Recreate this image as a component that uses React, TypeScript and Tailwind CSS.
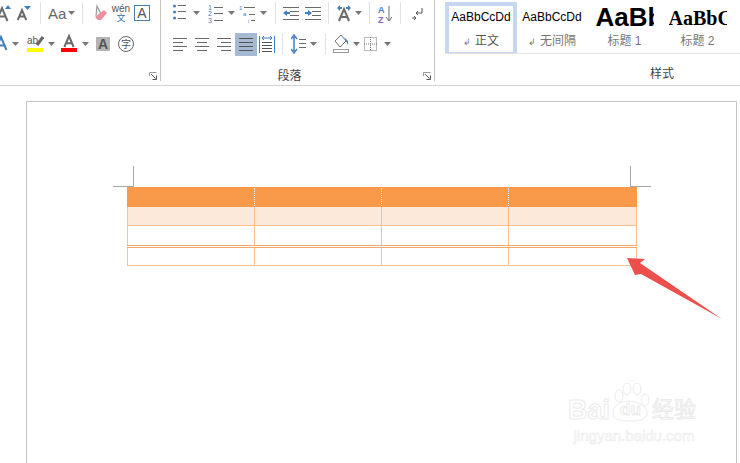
import React from "react";

const GRAY = "#6a6a6a";
const BLUE = "#3f7fbf";

// small ribbon drop-down arrow
function Caret({ ml }: { ml: string }) {
  return (
    <svg width="7" height="4" viewBox="0 0 7 4" className={`shrink-0 ${ml}`}>
      <path d="M0 0H7L3.5 4Z" fill="#777" />
    </svg>
  );
}

function Sep({ ml }: { ml: string }) {
  return <div className={`w-px h-[22px] shrink-0 bg-[#e1e1e1] ${ml}`} />;
}

function Ico({ w, ml, children, h = 22 }: { w: number; ml: string; h?: number; children: React.ReactNode }) {
  return (
    <svg width={w} height={h} viewBox={`0 0 ${w} ${h}`} className={`shrink-0 ${ml}`} fill="none">
      {children}
    </svg>
  );
}

function Lines({ x, w, ys, c = GRAY }: { x: number | number[]; w: number | number[]; ys: number[]; c?: string }) {
  return (
    <>
      {ys.map((y, i) => (
        <rect
          key={y}
          x={Array.isArray(x) ? x[i] : x}
          y={y}
          width={Array.isArray(w) ? w[i] : w}
          height="1"
          fill={c}
        />
      ))}
    </>
  );
}

function LetterA({ x, y, h, c = GRAY, w = 2 }: { x: number; y: number; h: number; c?: string; w?: number }) {
  const half = h * 0.42;
  return (
    <path
      d={`M${x - half} ${y + h}L${x} ${y}L${x + half} ${y + h}M${x - half * 0.6} ${y + h * 0.66}H${x + half * 0.6}`}
      stroke={c}
      strokeWidth={w}
    />
  );
}

function Launcher() {
  return (
    <svg width="8" height="8" viewBox="0 0 8 8" fill="none">
      <path d="M.5 4V.5H7.5" stroke="#999" />
      <path d="M2 2L6.5 6.5M7.5 3.5V7.5H3.5" stroke="#555" />
    </svg>
  );
}

function Group1() {
  return (
    <div className="w-[160px] shrink-0 flex flex-col">
      <div className="h-[22px] mt-[2px] flex items-center">
        <Ico w={16} ml="ml-[-4px]">
          <LetterA x={6} y={6} h={13} />
          <path d="M9 7L12 3L15 7Z" fill={BLUE} />
        </Ico>
        <Ico w={16} ml="ml-[5px]">
          <LetterA x={5} y={8} h={10} />
          <path d="M7 4H14L10.5 8Z" fill={BLUE} />
        </Ico>
        <Sep ml="ml-[7px]" />
        <div className="ml-[7px] w-[17px] shrink-0 text-[15px] leading-none text-[#666] font-['Liberation_Sans',sans-serif]">Aa</div>
        <Caret ml="ml-[3px]" />
        <Sep ml="ml-[7px]" />
        <Ico w={16} ml="ml-[9px]">
          <path d="M4 14L5 4L9 12" stroke="#999" strokeWidth="1.2" />
          <path d="M3 15L12 8L15 11L9 18H6Z" fill="#ee8f9f" />
        </Ico>
        <div className="ml-[4px] w-[18px] shrink-0 flex flex-col items-center font-['Liberation_Sans','Noto_Sans_CJK_SC',sans-serif]">
          <span className="text-[10px] leading-[10px] text-[#555]">wén</span>
          <span className="text-[9px] leading-[9px] text-[#2f75b5]">文</span>
        </div>
        <div className="ml-[4px] w-4 h-4 shrink-0 border border-[#4a7db0] flex items-center justify-center text-[14px] leading-none text-[#555] font-['Liberation_Sans',sans-serif]">A</div>
      </div>
      <div className="h-[24px] mt-[8px] flex items-center">
        <Ico w={10} ml="ml-[-2px]">
          <LetterA x={3} y={4} h={13} c={BLUE} />
        </Ico>
        <Caret ml="ml-[4px]" />
        <Ico w={17} ml="ml-[8px]" h={24}>
          <text x="0" y="12" fontSize="10" fill="#555" fontFamily="Liberation Sans">ab</text>
          <path d="M10 13L16 5" stroke="#666" strokeWidth="3" />
          <rect y="16" width="16" height="4" fill="#ffff00" />
        </Ico>
        <Caret ml="ml-[4px]" />
        <Ico w={17} ml="ml-[6px]" h={24}>
          <LetterA x={8} y={4} h={11} />
          <rect y="16" width="16" height="4" fill="#ff0000" />
        </Ico>
        <Caret ml="ml-[4px]" />
        <div className="ml-[7px] w-[14px] h-[14px] shrink-0 bg-[#b4b4b4] flex items-center justify-center text-[14px] font-bold leading-none text-[#555] font-['Liberation_Sans',sans-serif]">A</div>
        <div className="ml-[8px] w-4 h-4 shrink-0 rounded-full border border-[#666] flex items-center justify-center text-[10px] leading-none text-[#555] font-['Noto_Sans_CJK_SC',sans-serif]">字</div>
      </div>
      <div className="flex justify-end mt-[16px] pr-[3px]">
        <Launcher />
      </div>
    </div>
  );
}

function Group2() {
  return (
    <div className="relative w-[274px] shrink-0 border-l border-[#c6c6c6] h-[81px] flex flex-col">
      <div className="h-[22px] mt-[2px] flex items-center">
        <Ico w={14} ml="ml-[12px]">
          <circle cx="1.5" cy="4" r="1.5" fill={BLUE} />
          <circle cx="1.5" cy="10" r="1.5" fill={BLUE} />
          <circle cx="1.5" cy="16" r="1.5" fill={BLUE} />
          <Lines x={5} w={8} ys={[3, 9, 16]} />
        </Ico>
        <Caret ml="ml-[6px]" />
        <Ico w={15} ml="ml-[8px]">
          <text x="0" y="8" fontSize="7" fill={BLUE} fontFamily="Liberation Sans">1</text>
          <text x="0" y="14" fontSize="7" fill={BLUE} fontFamily="Liberation Sans">2</text>
          <text x="0" y="21" fontSize="7" fill={BLUE} fontFamily="Liberation Sans">3</text>
          <Lines x={6} w={9} ys={[5, 11, 18]} />
        </Ico>
        <Caret ml="ml-[5px]" />
        <Ico w={17} ml="ml-[4px]">
          <text x="0" y="8" fontSize="6" fill={BLUE} fontFamily="Liberation Sans">1</text>
          <text x="4" y="14" fontSize="6" fill={BLUE} fontFamily="Liberation Sans">a</text>
          <text x="9" y="21" fontSize="6" fill={BLUE} fontFamily="Liberation Sans">i</text>
          <Lines x={[5, 10, 12]} w={[11, 6, 4]} ys={[5, 12, 18]} />
        </Ico>
        <Caret ml="ml-[4px]" />
        <Sep ml="ml-[8px]" />
        <Ico w={16} ml="ml-[7px]">
          <Lines x={[0, 7, 7, 0]} w={[16, 9, 9, 16]} ys={[5, 9, 13, 17]} />
          <path d="M0 11L4 8V10H7V12H4V14Z" fill={BLUE} />
        </Ico>
        <Ico w={16} ml="ml-[6px]">
          <Lines x={[0, 7, 7, 0]} w={[16, 9, 9, 16]} ys={[5, 9, 13, 17]} />
          <path d="M7 11L3 8V10H0V12H3V14Z" fill={BLUE} />
        </Ico>
        <Sep ml="ml-[7px]" />
        <Ico w={16} ml="ml-[7px]">
          <LetterA x={8} y={7} h={12} />
          <path d="M1 6L4 3V5H6V7H4V9ZM15 6L12 3V5H10V7H12V9Z" fill={BLUE} />
        </Ico>
        <Caret ml="ml-[3px]" />
        <Sep ml="ml-[7px]" />
        <Ico w={14} ml="ml-[8px]">
          <text x="0" y="11" fontSize="9" fontWeight="bold" fill={BLUE} fontFamily="Liberation Sans">A</text>
          <text x="0" y="21" fontSize="9" fontWeight="bold" fill="#8e63ad" fontFamily="Liberation Sans">Z</text>
          <path d="M11 4V18M8 15L11 19L14 15" stroke={GRAY} />
        </Ico>
        <Sep ml="ml-[8px]" />
        <Ico w={11} ml="ml-[11px]">
          <path d="M10 6V11H4M6 9L4 11L6 13" stroke="#555" />
          <path d="M0 16H4M2 14L4 16L2 18" stroke="#555" />
        </Ico>
      </div>
      <div className="h-[24px] mt-[8px] flex items-center">
        <Ico w={14} ml="ml-[12px]">
          <Lines x={0} w={[14, 10, 14, 10]} ys={[5, 9, 13, 17]} />
        </Ico>
        <Ico w={14} ml="ml-[8px]">
          <Lines x={[0, 2, 0, 2]} w={[14, 10, 14, 10]} ys={[5, 9, 13, 17]} />
        </Ico>
        <Ico w={14} ml="ml-[8px]">
          <Lines x={[0, 4, 0, 4]} w={[14, 10, 14, 10]} ys={[5, 9, 13, 17]} />
        </Ico>
        <div className="ml-[4px] w-[22px] h-[23px] shrink-0 bg-[#a5b9d2] flex flex-col justify-center gap-[3px] px-[4px]">
          <div className="h-px bg-[#555]" />
          <div className="h-px bg-[#555]" />
          <div className="h-px bg-[#555]" />
          <div className="h-px bg-[#555]" />
        </div>
        <Ico w={16} ml="ml-[2px]">
          <path d="M.5 3V20M15.5 3V20" stroke={BLUE} />
          <path d="M3 5H13M3 5L5 3M3 5L5 7M13 5L11 3M13 5L11 7" stroke={BLUE} />
          <Lines x={3} w={10} ys={[9, 12, 15, 18]} c="#555" />
        </Ico>
        <Sep ml="ml-[7px]" />
        <Ico w={15} ml="ml-[8px]" h={24}>
          <path d="M3 5V19M0 7L3 3L6 7M0 17L3 21L6 17" stroke={BLUE} strokeWidth="1.5" />
          <Lines x={8} w={7} ys={[7, 11, 15]} />
        </Ico>
        <Caret ml="ml-[4px]" />
        <Sep ml="ml-[8px]" />
        <Ico w={16} ml="ml-[7px]">
          <path d="M8 2L13 8L7 14L2 8Z" stroke="#777" />
          <path d="M11 4L15 8V12L14 10Z" fill={BLUE} />
          <rect x=".5" y="16.5" width="15" height="3" stroke="#999" />
        </Ico>
        <Caret ml="ml-[4px]" />
        <Ico w={13} ml="ml-[4px]">
          <rect x=".5" y="4.5" width="12" height="13" stroke="#777" strokeDasharray="1 1" />
          <path d="M6.5 4V18M0 11H13" stroke="#777" strokeDasharray="1 1" />
        </Ico>
        <Caret ml="ml-[7px]" />
      </div>
      <div className="mt-[11px] text-center pr-[16px] text-[12px] leading-[16px] text-[#444] font-['Noto_Sans_CJK_SC',sans-serif]">段落</div>
      <div className="absolute right-[3px] bottom-[1px]">
        <Launcher />
      </div>
    </div>
  );
}

function StyleCard({
  sample,
  label,
  selected,
  w,
}: {
  sample: string;
  label: string;
  selected?: boolean;
  w: string;
}) {
  return (
    <div
      className={`${w} h-[54px] shrink-0 flex flex-col items-center ${
        selected ? "border-4 border-[#c5d7f1] pt-px" : "pt-[5px]"
      }`}
    >
      <div className="h-[20px] whitespace-nowrap flex items-center text-[12px] text-black font-['Liberation_Sans',sans-serif]">
        {sample}
      </div>
      <div className="mt-[6px] text-[12px] leading-[16px] text-[#777] whitespace-nowrap font-['Liberation_Sans','Noto_Sans_CJK_SC',sans-serif]">
        <span className="text-[9px] mr-[4px]">↲</span>
        <span className={selected ? "text-[#555]" : ""}>{label}</span>
      </div>
    </div>
  );
}

function StylesGroup() {
  return (
    <div className="flex-1 h-[81px] ml-[10px] flex flex-col min-w-0">
      <div className="h-[57px] pt-[2px] border-b border-[#e4e4e4] flex items-start overflow-hidden">
        <StyleCard selected w="w-[72px]" label="正文" sample="AaBbCcDd" />
        <StyleCard w="w-[70px]" label="无间隔" sample="AaBbCcDd" />
        <div className="w-[75px] h-[54px] shrink-0 flex flex-col items-center pt-px">
          <div className="w-[58px] h-[28px] overflow-hidden whitespace-nowrap text-[26px] leading-[28px] font-bold text-black font-['Liberation_Sans',sans-serif]">AaBb</div>
          <div className="mt-[2px] text-[12px] leading-[16px] text-[#777] font-['Liberation_Sans','Noto_Sans_CJK_SC',sans-serif]">标题 1</div>
        </div>
        <div className="w-[71px] h-[54px] shrink-0 flex flex-col items-center pt-[3px]">
          <div className="w-[58px] h-[26px] overflow-hidden whitespace-nowrap text-[20px] leading-[26px] font-bold text-black font-['Liberation_Serif',serif]">AaBbC</div>
          <div className="mt-[2px] text-[12px] leading-[16px] text-[#777] font-['Liberation_Sans','Noto_Sans_CJK_SC',sans-serif]">标题 2</div>
        </div>
      </div>
      <div className="mt-[11px] pl-[205px] text-[12px] leading-[16px] text-[#444] font-['Noto_Sans_CJK_SC',sans-serif]">样式</div>
    </div>
  );
}

function TableRow({ cls, cell }: { cls: string; cell: string }) {
  return (
    <div className={`grid grid-cols-[127px_127px_127px_1fr] ${cls}`}>
      <div className={cell} />
      <div className={cell} />
      <div className={cell} />
      <div className={cell} />
    </div>
  );
}

function Watermark() {
  return (
    <div className="absolute left-[568px] top-[383px] w-[132px] flex flex-col items-center select-none">
      <div className="w-full flex items-end text-transparent [-webkit-text-stroke:1px_#ebebeb] font-['Liberation_Sans','Noto_Sans_CJK_SC',sans-serif]">
        <span className="text-[27px] leading-[26px] font-bold">Bai</span>
        <div className="relative w-[41px] h-[40px] shrink-0">
          <svg width="41" height="40" viewBox="0 0 41 40" fill="none" stroke="#ebebeb" className="absolute inset-0">
            <ellipse cx="9" cy="13" rx="4" ry="6" />
            <ellipse cx="17" cy="6" rx="4" ry="6" />
            <ellipse cx="27" cy="6" rx="4" ry="6" />
            <ellipse cx="35" cy="17" rx="4" ry="6" />
            <path d="M3 30C3 22 11 18 19 18C27 18 37 23 37 30C37 37 28 38 20 38C11 38 3 37 3 30Z" />
          </svg>
          <span className="absolute left-[10px] bottom-[2px] text-[17px] leading-[22px] font-bold">du</span>
        </div>
        <span className="text-[22px] leading-[26px] ml-px whitespace-nowrap">经验</span>
      </div>
      <div className="mt-[5px] text-[15px] leading-[16px] text-transparent [-webkit-text-stroke:0.6px_#ebebeb] font-['Liberation_Sans',sans-serif]">jingyan.baidu.com</div>
    </div>
  );
}

export default function App() {
  return (
    <div className="relative w-[740px] h-[463px] overflow-hidden bg-white">
      {/* ribbon */}
      <div className="h-[86px] border-b border-[#d4d4d4] flex items-start">
        <Group1 />
        <Group2 />
        <div className="w-px h-[81px] bg-[#c6c6c6] shrink-0" />
        <StylesGroup />
      </div>

      {/* document page */}
      <div className="mt-[15px] ml-[26px] w-[711px] h-[400px] border border-[#c6c6c6] pt-[85px] pl-[100px]">
        <div className="relative w-[510px]">
          {/* margin crop marks */}
          <div className="absolute left-[-14px] top-[-21px] w-[21px] h-[21px] border-r border-b border-[#a6a6a6]" />
          <div className="absolute left-[503px] top-[-21px] w-[21px] h-[21px] border-l border-b border-[#a6a6a6]" />

          <TableRow
            cls="h-[20px] bg-[#f99a4a] border-x border-[#f99a4a]"
            cell="my-px border-r border-dotted border-r-[#e8e8e8] last:border-r-0"
          />
          <TableRow
            cls="h-[19px] bg-[#fce9da] border-x border-b border-[#fbc08f]"
            cell="border-r border-[#fbc08f] last:border-r-0"
          />
          <TableRow
            cls="h-[19px] border-x border-[#fbc08f]"
            cell="border-r border-[#fbc08f] last:border-r-0"
          />
          <div className="h-[3px] border-y border-[#f4a76a]" />
          <TableRow
            cls="h-[18px] border-x border-b border-[#fbc08f]"
            cell="border-r border-[#fbc08f] last:border-r-0"
          />
        </div>
      </div>

      {/* annotation arrow */}
      <svg className="absolute left-[620px] top-[250px]" width="110" height="75" viewBox="0 0 110 75">
        <path d="M7 8L25 9L20 13L102 69L21 24L15 25Z" fill="#ec4f4c" />
      </svg>

      <Watermark />
    </div>
  );
}
